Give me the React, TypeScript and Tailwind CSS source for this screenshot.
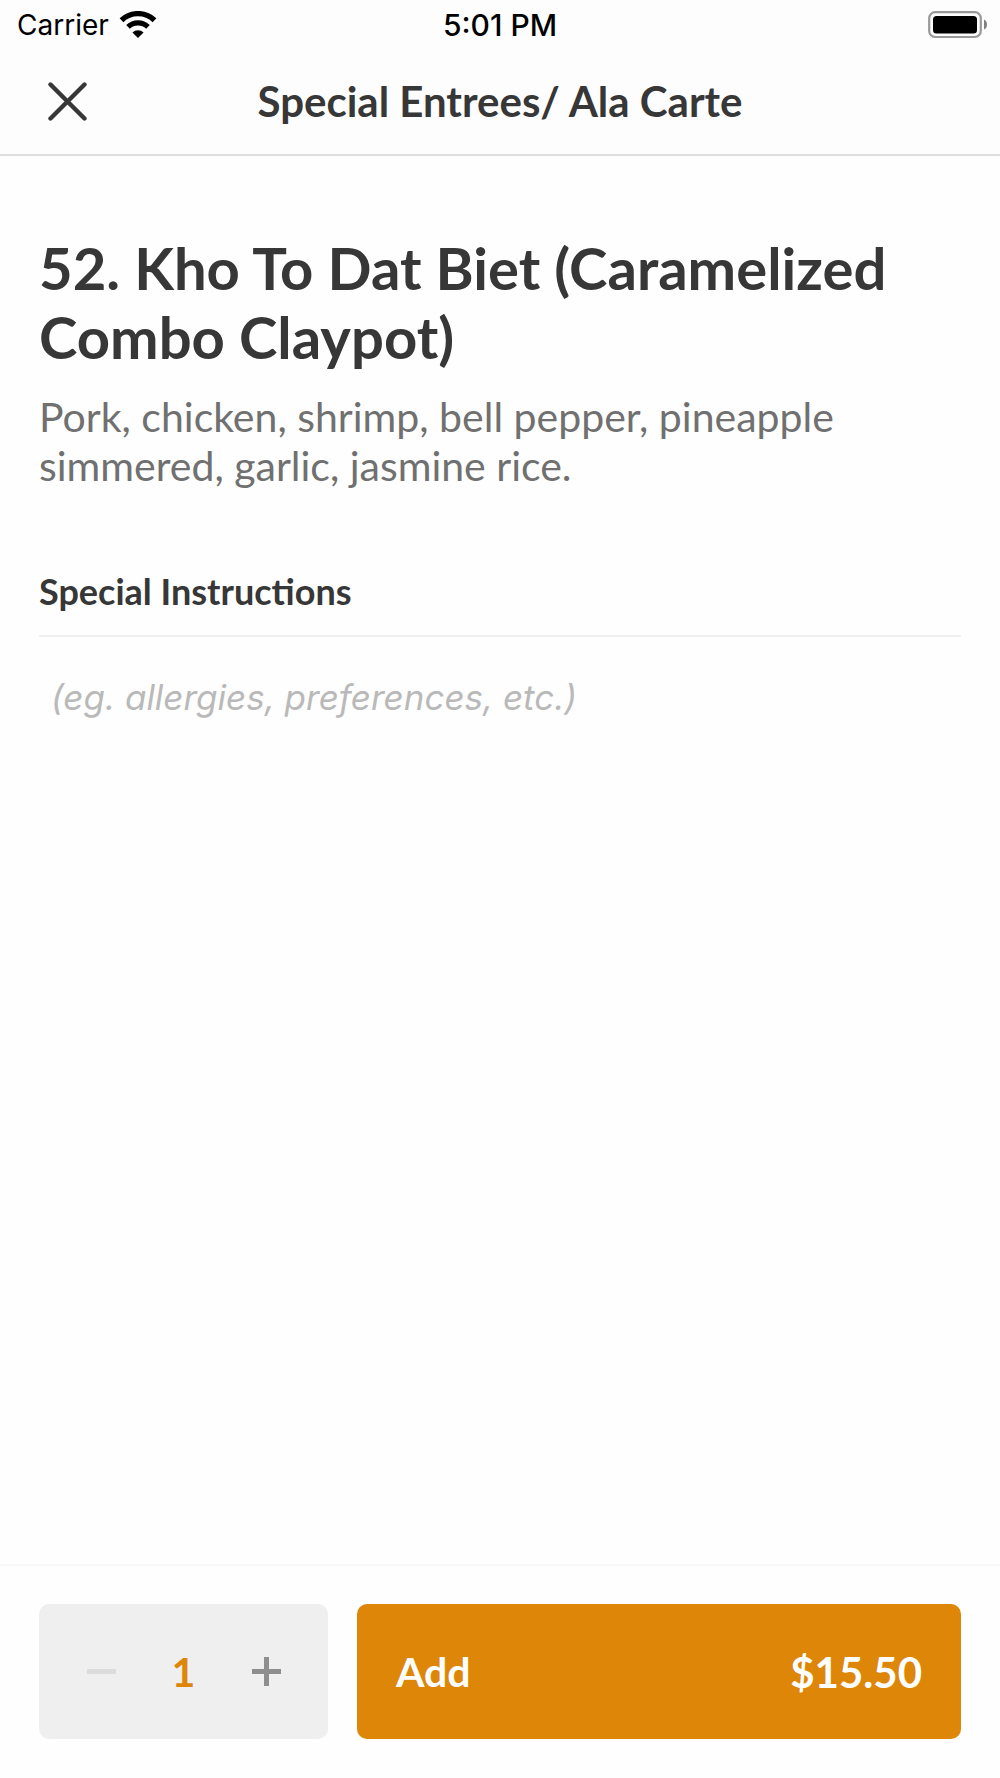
import { useState } from "react";

const StatusBar = () => (
  <div className="grid grid-cols-3 items-center h-[50px] px-3 font-['Inter',sans-serif] text-[28px] leading-8 text-black">
    <div className="flex items-center gap-[10px] pl-[5px]">
      <span>Carrier</span>
      <svg width="38" height="28" viewBox="0 0 38 28" fill="none" aria-label="Wi-Fi">
        <path d="M2.5 9.2 A24 24 0 0 1 35.5 9.2" stroke="black" strokeWidth="5.4" />
        <path d="M9 15.8 A14.5 14.5 0 0 1 29 15.8" stroke="black" strokeWidth="5.2" />
        <path d="M13.4 21.6 A8 8 0 0 1 24.6 21.6 L19 27 Z" fill="black" />
      </svg>
    </div>
    <span className="text-center text-[30px] font-medium">5:01 PM</span>
    <svg className="justify-self-end" width="60" height="28" viewBox="0 0 60 28" fill="none" aria-label="Battery">
      <rect x="1.2" y="1.2" width="51.6" height="24.8" rx="6" stroke="#999999" strokeWidth="2.2" />
      <rect x="5" y="5" width="44" height="17.6" rx="3.5" fill="black" />
      <path d="M56 8.5 Q59 10 59 13.5 Q59 17 56 18.5 Z" fill="#808080" />
    </svg>
  </div>
);

const Header = ({ title }: { title: string }) => (
  <header className="bg-[#fdfdfd] border-b-2 border-[#dedede]">
    <StatusBar />
    <div className="grid grid-cols-[56px_1fr_56px] items-center h-[104px] px-10 pb-[2px]">
      <button type="button" aria-label="Close" className="flex size-14 items-center justify-start pl-2">
        <svg width="39" height="39" viewBox="0 0 39 39" stroke="#373737" strokeWidth="4.4" strokeLinecap="round">
          <path d="M2.5 2.5 L36.5 36.5 M36.5 2.5 L2.5 36.5" />
        </svg>
      </button>
      <h1 className="text-center text-[42px] leading-[50px] font-bold">{title}</h1>
    </div>
  </header>
);

const QuantityPicker = () => {
  const [quantity, setQuantity] = useState(1);

  return (
    <div className="flex w-[289px] items-center justify-between rounded-[10px] bg-[#efefef] px-10">
      <button
        type="button"
        aria-label="Decrease quantity"
        disabled={quantity === 1}
        className="flex size-11 items-center justify-center text-[#8e8e8e] disabled:text-[#dcdcdc]"
        onClick={() => setQuantity(quantity - 1)}
      >
        <svg width="29" height="29" viewBox="0 0 29 29" stroke="currentColor" strokeWidth="5">
          <path d="M0 14.5 H29" />
        </svg>
      </button>
      <span className="text-[41px] leading-[50px] font-bold text-[#dd8608]">{quantity}</span>
      <button
        type="button"
        aria-label="Increase quantity"
        className="flex size-11 items-center justify-center text-[#8e8e8e]"
        onClick={() => setQuantity(quantity + 1)}
      >
        <svg width="29" height="29" viewBox="0 0 29 29" stroke="currentColor" strokeWidth="5">
          <path d="M0 14.5 H29 M14.5 0 V29" />
        </svg>
      </button>
    </div>
  );
};

const App = () => {
  return (
    <div className="flex min-h-screen flex-col bg-[#fefefe] font-['Lato',sans-serif] text-[#373737]">
      <Header title="Special Entrees/ Ala Carte" />
      <main className="flex flex-1 flex-col px-[39px] pt-[77px]">
        <h2 className="text-[58px] leading-[69px] font-bold">
          52. Kho To Dat Biet (Caramelized Combo Claypot)
        </h2>
        <p className="pt-[21px] text-[41px] leading-[49px] text-[#707070]">
          Pork, chicken, shrimp, bell pepper, pineapple simmered, garlic, jasmine rice.
        </p>
        <label
          htmlFor="instructions"
          className="mt-[79px] border-b-2 border-[#efefef] pb-[22px] text-[36px] leading-[44px] font-bold"
        >
          Special Instructions
        </label>
        <textarea
          id="instructions"
          placeholder="(eg. allergies, preferences, etc.)"
          className="flex-1 resize-none px-3 pt-9 font-['Inter',sans-serif] text-[35px] leading-[48px] italic outline-none placeholder:text-[#b9b9b9]"
        />
      </main>
      <footer className="flex h-[214px] gap-[29px] border-t-2 border-[#f8f8f8] px-[39px] pt-[38px] pb-[39px]">
        <QuantityPicker />
        <button
          type="button"
          className="flex flex-1 items-center justify-between rounded-[10px] bg-[#dd8608] px-[39px] text-[41px] leading-[50px] font-bold text-white"
        >
          <span>Add</span>
          <span className="text-[42px]">$15.50</span>
        </button>
      </footer>
    </div>
  );
};

export default App;
